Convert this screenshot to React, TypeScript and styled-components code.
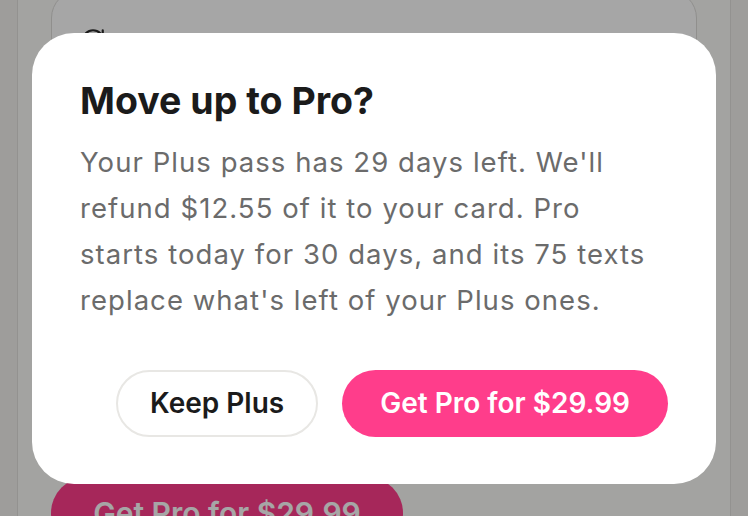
import React from 'react';
import styled, { createGlobalStyle } from 'styled-components';

const GlobalStyle = createGlobalStyle`
  html, body {
    margin: 0;
    padding: 0;
    background: #f3f2ef;
  }
  body {
    font-family: Inter, "Noto Sans", "Liberation Sans", sans-serif;
  }
  * {
    box-sizing: border-box;
  }
`;

const Page = styled.div`
  width: 748px;
  height: 516px;
  overflow: hidden;
  position: relative;
  background: #f3f2ef;
`;

const Frame = styled.main`
  margin: 0 17px;
  height: 100%;
  background: #fbfaf8;
  border-left: 1px solid #e2e1de;
  border-right: 1px solid #e2e1de;
  padding: 0 33px;
  display: flex;
  flex-direction: column;
  justify-content: space-between;
`;

const PlanCard = styled.section`
  margin-top: -10px;
  height: 140px;
  border: 1.5px solid #dddcd9;
  border-radius: 28px;
  background: #ffffff;
  padding: 36px 28px 0;
  display: flex;
  align-items: flex-start;
  gap: 12px;
  color: #2a2a2a;
`;

const PlanName = styled.div`
  font-size: 26px;
  line-height: 26px;
  font-weight: 600;
  color: #1c1c1c;
  padding-top: 10px;
`;

const BuyButton = styled.button`
  align-self: flex-start;
  width: 352px;
  height: 72px;
  margin-bottom: -33px;
  border: none;
  border-radius: 36px;
  background: #ff3d8b;
  color: #ffffff;
  font-family: inherit;
  font-size: 30px;
  font-weight: 600;
`;

const Overlay = styled.div`
  position: absolute;
  inset: 0;
  background: rgba(0, 0, 0, 0.35);
  display: flex;
  align-items: center;
  justify-content: center;
`;

const Dialog = styled.div`
  width: 684px;
  background: #ffffff;
  border-radius: 42px;
  padding: 46px 48px 47px;
`;

const Title = styled.h2`
  margin: 0;
  font-size: 37.5px;
  line-height: 44px;
  font-weight: 700;
  color: #1b1b1b;
`;

const Body = styled.p`
  margin: 16px 0 0;
  max-width: 572px;
  font-size: 27.5px;
  line-height: 46px;
  letter-spacing: 1.05px;
  font-weight: 400;
  color: #6b6b6b;
`;

const Actions = styled.div`
  margin-top: 47px;
  display: flex;
  justify-content: flex-end;
  gap: 24px;
`;

const Action = styled.button<{ $primary?: boolean }>`
  height: 67px;
  padding: 0 ${(p) => (p.$primary ? '38px' : '32px')};
  border-radius: 34px;
  font-family: inherit;
  font-size: 28px;
  font-weight: 600;
  cursor: pointer;
  border: ${(p) => (p.$primary ? 'none' : '2px solid #e8e7e4')};
  background: ${(p) => (p.$primary ? '#ff3d8b' : '#ffffff')};
  color: ${(p) => (p.$primary ? '#ffffff' : '#1b1b1b')};
`;

function RenewIcon() {
  return (
    <svg width="26" height="26" viewBox="0 0 24 24" fill="none" stroke="currentColor"
      strokeWidth="2" strokeLinecap="round" strokeLinejoin="round">
      <path d="M21 12a9 9 0 1 1-9-9c2.52 0 4.93 1 6.74 2.74L21 8" />
      <path d="M21 3v5h-5" />
    </svg>
  );
}

export default function App() {
  return (
    <>
      <GlobalStyle />
      <Page>
        <Frame>
          <PlanCard>
            <RenewIcon />
            <PlanName>Plus pass</PlanName>
          </PlanCard>
          <BuyButton>Get Pro for $29.99</BuyButton>
        </Frame>
        <Overlay>
          <Dialog role="dialog" aria-modal="true">
            <Title>Move up to Pro?</Title>
            <Body>
              Your Plus pass has 29 days left. We'll refund $12.55 of it to your card. Pro starts
              today for 30 days, and its 75 texts replace what's left of your Plus ones.
            </Body>
            <Actions>
              <Action>Keep Plus</Action>
              <Action $primary>Get Pro for $29.99</Action>
            </Actions>
          </Dialog>
        </Overlay>
      </Page>
    </>
  );
}
